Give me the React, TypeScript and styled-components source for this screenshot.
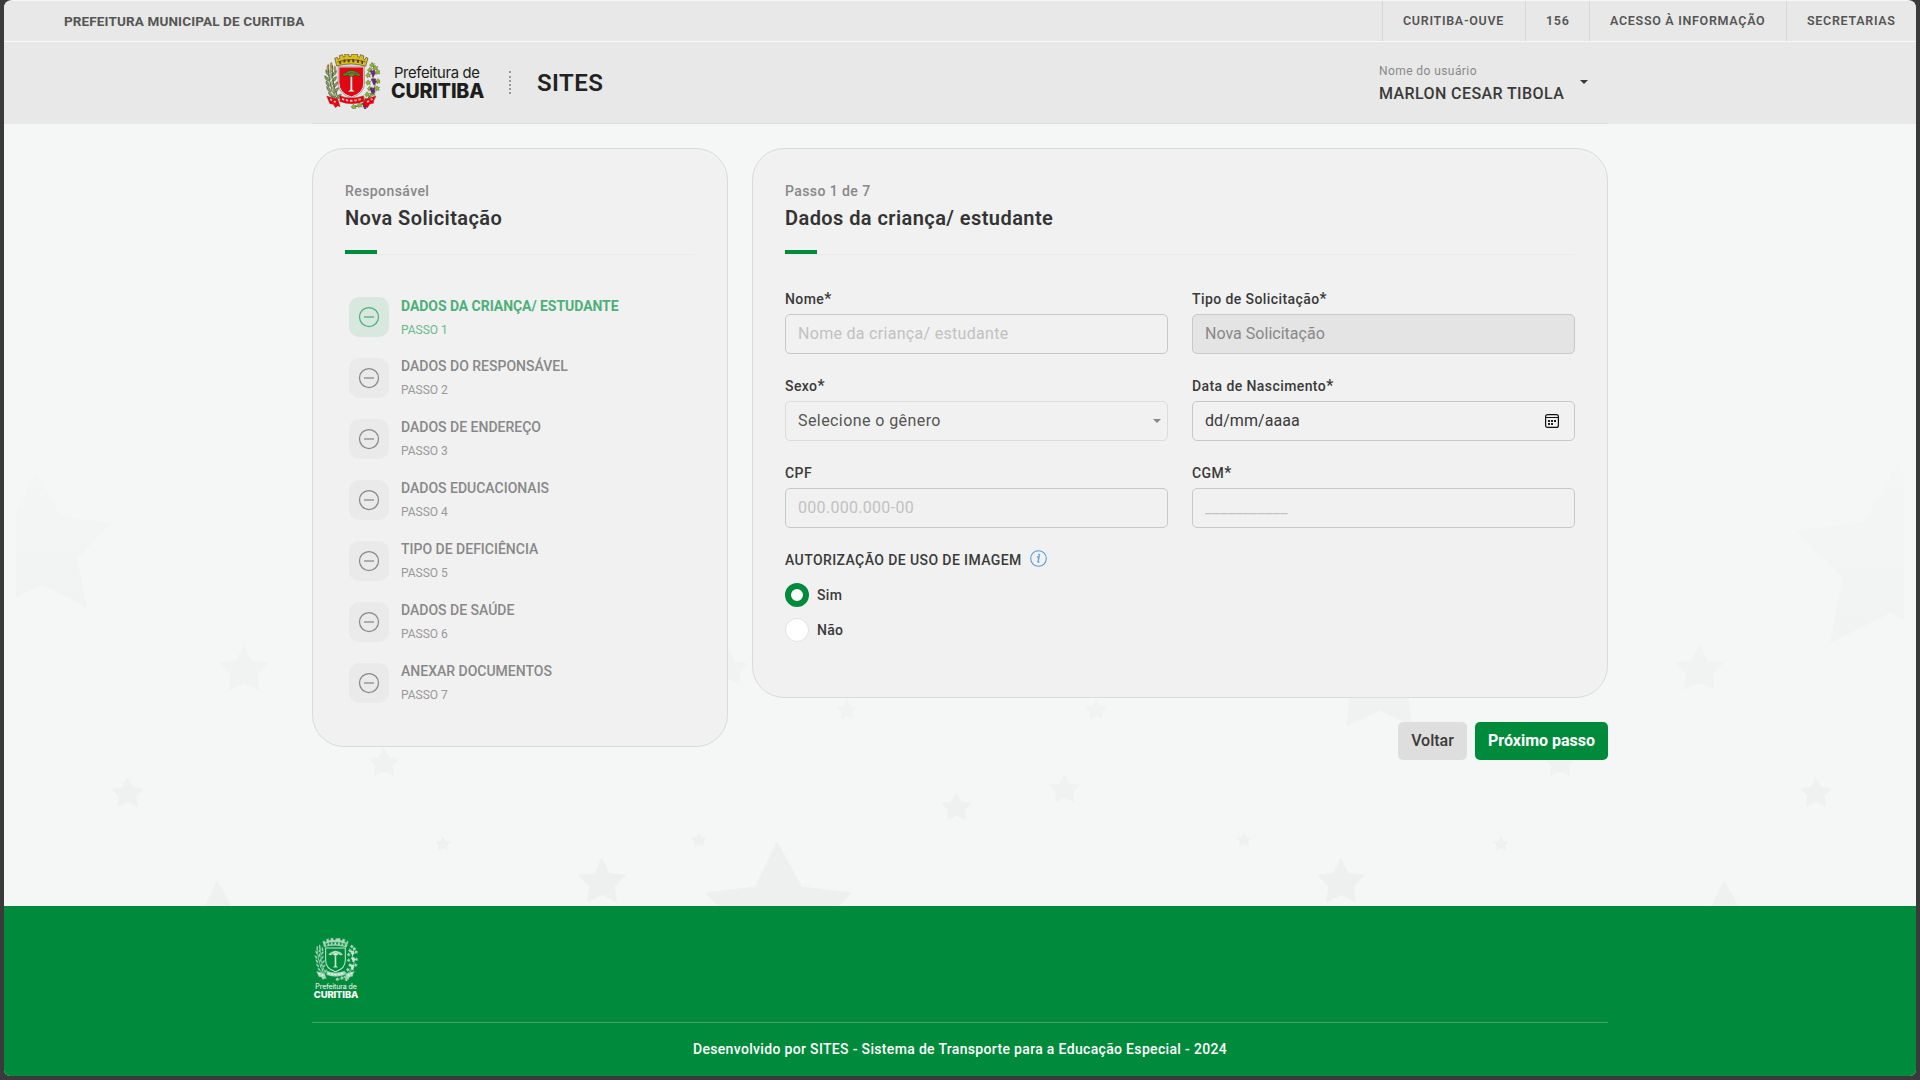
import React from "react";
import styled, { createGlobalStyle, css } from "styled-components";

const GlobalStyle = createGlobalStyle`
  * { box-sizing: border-box; }
  html, body { margin: 0; padding: 0; background: #3a3a3a; }
  body { font-family: Roboto, "Liberation Sans", sans-serif; color: #3a3a3a; overflow: hidden; }
  button, input { font-family: inherit; }
`;

const Desktop = styled.div`
  width: 1920px;
  height: 1080px;
  padding: 0 4px 4px;
  background: #3a3a3a;
`;

const Page = styled.div`
  position: relative;
  display: flex;
  flex-direction: column;
  height: 1076px;
  background: #f5f7f6;
  border-radius: 8px 8px 6px 6px;
  overflow: hidden;
`;

const Container = styled.div`
  width: 1296px;
  margin: 0 auto;
`;

const TopBar = styled.div`
  display: flex;
  justify-content: space-between;
  height: 41px;
  margin-top: 1px;
  background: #e8e8e8;
  border-bottom: 1px solid #f8f9f9;
  line-height: 40px;
  color: #555;
`;

const TopTitle = styled.span`
  padding-left: 60px;
  font-size: 13.5px;
  font-weight: 700;
  letter-spacing: 0.13px;
`;

const TopLinks = styled.nav`
  display: flex;
`;

const TopLink = styled.a<{ $w: number }>`
  width: ${(p) => p.$w}px;
  padding-left: 20px;
  border-left: 1px solid #d6d7d7;
  font-size: 12.5px;
  line-height: 40px;
  font-weight: 600;
  letter-spacing: 0.7px;
  white-space: nowrap;
`;

const Header = styled.header`
  height: 82px;
  background: #e8e8e8;
`;

const HeaderInner = styled(Container)`
  display: flex;
  justify-content: space-between;
  height: 82px;
  border-bottom: 1px solid #dcdfdd;
`;

const Brand = styled.div`
  display: flex;
  align-items: flex-start;
  padding: 12px 0 0 12px;
`;

const BrandText = styled.div`
  width: 94px;
  margin: 10px 0 0 11px;
  color: #1d1d1b;
  font-family: Inter, sans-serif;
  white-space: nowrap;
`;

const BrandLight = styled.div`
  padding-left: 3px;
  font-size: 14.8px;
  line-height: 18px;
  letter-spacing: -0.35px;
`;

const BrandStrong = styled.div`
  margin-top: -1px;
  font-size: 19.6px;
  font-weight: 800;
  line-height: 20px;
  letter-spacing: -0.15px;
`;

const Dots = styled.div`
  width: 0;
  height: 23px;
  margin: 17px 0 0 24px;
  border-left: 2px dotted #999;
`;

const SiteName = styled.div`
  margin: 14px 0 0 26px;
  font-size: 24px;
  line-height: 30px;
  font-weight: 600;
  letter-spacing: 0.45px;
  color: #222;
`;

const User = styled.div`
  display: flex;
  width: 229px;
  padding-top: 20px;
`;

const UserLabel = styled.div`
  font-size: 12px;
  line-height: 18px;
  letter-spacing: 0.42px;
  color: #888;
`;

const UserName = styled.div`
  margin-top: 3px;
  font-size: 16px;
  line-height: 22px;
  font-weight: 500;
  letter-spacing: 0.4px;
  white-space: nowrap;
`;

const Caret = styled.span<{ $size: number; $color: string }>`
  width: 0;
  height: 0;
  border: ${(p) => p.$size}px solid transparent;
  border-top-color: ${(p) => p.$color};
  border-bottom: 0;
`;

const UserCaret = styled(Caret)`
  margin: 18px 0 0 16px;
`;

const Main = styled.main`
  position: relative;
  flex: 1;
`;

const Sky = styled.svg`
  position: absolute;
  inset: 0;
  width: 1912px;
  height: 782px;
`;

const Content = styled(Container)`
  position: relative;
  display: grid;
  grid-template-columns: 416px 856px;
  gap: 24px;
  align-items: start;
  padding-top: 24px;
`;

const Card = styled.section<{ $h: number }>`
  height: ${(p) => p.$h}px;
  padding: 31px 32px;
  background: #f1f1f1;
  border: 1px solid #dadcdb;
  border-radius: 32px;
`;

const Kicker = styled.div`
  font-size: 14px;
  line-height: 22px;
  font-weight: 500;
  letter-spacing: 0.42px;
  color: #888;
`;

const Title = styled.h1`
  margin: 4px 0 20px;
  font-size: 20px;
  line-height: 24px;
  font-weight: 600;
  letter-spacing: 0.43px;
  color: #333;
`;

const Rule = styled.div`
  height: 5px;
  border-bottom: 1px solid #e9ebea;
  &::before {
    content: "";
    display: block;
    width: 32px;
    height: 4px;
    background: #008b3c;
  }
`;

const Steps = styled.ol`
  display: flex;
  flex-direction: column;
  gap: 21px;
  margin: 42px 0 0;
  padding: 0 0 0 4px;
  list-style: none;
`;

const Step = styled.li<{ $active?: boolean }>`
  display: flex;
  gap: 12px;
  height: 40px;
  color: ${(p) => (p.$active ? "#4db079" : "#888")};
`;

const StepIcon = styled.span<{ $active?: boolean }>`
  display: grid;
  place-items: center;
  width: 40px;
  height: 40px;
  border-radius: 10px;
  background: ${(p) => (p.$active ? "#d9e8de" : "#eaeaea")};
`;

const StepName = styled.div<{ $active?: boolean }>`
  margin-top: ${(p) => (p.$active ? 0 : -1)}px;
  font-size: 14px;
  line-height: 18px;
  font-weight: ${(p) => (p.$active ? 700 : 500)};
  letter-spacing: ${(p) => (p.$active ? -0.05 : 0)}px;
`;

const StepNumber = styled.div<{ $active?: boolean }>`
  margin-top: 7px;
  font-size: 12px;
  line-height: 16px;
  color: ${(p) => (p.$active ? "#68ba8c" : "#999")};
`;

const FormGrid = styled.div`
  display: grid;
  grid-template-columns: 383px 383px;
  gap: 22px 24px;
  margin-top: 34px;
`;

const Field = styled.label`
  display: flex;
  flex-direction: column;
`;

const labelText = css`
  font-size: 14px;
  font-weight: 500;
  letter-spacing: 0.41px;
  color: #3a3a3a;
`;

const FieldLabel = styled.span`
  ${labelText}
  height: 25px;
  line-height: 20px;
  white-space: nowrap;
`;

const Star = styled.span`
  font-size: 16px;
  line-height: 16px;
`;

const box = css`
  width: 383px;
  height: 40px;
  padding: 0 12px;
  border: 1px solid #c8c8c8;
  border-radius: 5px;
  font-size: 16px;
  letter-spacing: 0.3px;
`;

const Input = styled.input`
  ${box}
  padding-bottom: 2px;
  background: transparent;
  outline: none;
  &::placeholder { color: #c1c1c1; opacity: 1; }
  &:disabled { background: #e4e4e4; color: #888; letter-spacing: 0.02px; }
`;

const FauxBox = styled.div<{ $soft?: boolean }>`
  ${box}
  display: flex;
  align-items: center;
  justify-content: space-between;
  padding-bottom: 1px;
  border-color: ${(p) => (p.$soft ? "#dcdcdc" : "#c8c8c8")};
  padding-right: ${(p) => (p.$soft ? 6 : 15)}px;
  color: ${(p) => (p.$soft ? "#555" : "#3a3a3a")};
  letter-spacing: ${(p) => (p.$soft ? 0.42 : 0.06)}px;
`;

const Legend = styled.div`
  ${labelText}
  display: flex;
  align-items: center;
  gap: 8px;
  height: 20px;
  margin-top: 22px;
`;

const RadioGroup = styled.div`
  display: flex;
  flex-direction: column;
  gap: 11px;
  margin-top: 13px;
`;

const Radio = styled.label`
  ${labelText}
  display: flex;
  align-items: center;
  gap: 8px;
  height: 24px;
  letter-spacing: 0.3px;
`;

const RadioDot = styled.span<{ $on?: boolean }>`
  width: 24px;
  height: 24px;
  border-radius: 50%;
  background: #fff;
  border: ${(p) => (p.$on ? "6.5px solid #008b3c" : "1px solid #dfe2e6")};
`;

const Actions = styled.div`
  display: flex;
  justify-content: flex-end;
  gap: 8px;
  margin-top: 24px;
`;

const Button = styled.button<{ $primary?: boolean }>`
  width: ${(p) => (p.$primary ? 133 : 69)}px;
  height: 38px;
  padding: 0 0 2px;
  border: 0;
  border-radius: 5px;
  background: ${(p) => (p.$primary ? "#008b3c" : "#dedede")};
  color: ${(p) => (p.$primary ? "#fff" : "#3a3a3a")};
  font-size: 16px;
  font-weight: ${(p) => (p.$primary ? 700 : 500)};
  white-space: nowrap;
`;

const Footer = styled.footer`
  position: relative;
  height: 170px;
  background: #008b3c;
  color: #fff;
`;

const FooterTop = styled(Container)`
  height: 117px;
  padding: 32px 0 0 1px;
  border-bottom: 1px solid #3fa466;
`;

const FooterBrand = styled.div`
  display: flex;
  flex-direction: column;
  align-items: center;
  width: 46px;
  font-family: Inter, sans-serif;
  white-space: nowrap;
`;

const FooterLight = styled.div`
  margin-top: 1px;
  font-size: 7px;
  line-height: 9px;
  letter-spacing: -0.1px;
`;

const FooterStrong = styled.div`
  font-size: 9.5px;
  line-height: 8px;
  font-weight: 800;
  letter-spacing: -0.15px;
`;

const Credit = styled.div`
  margin-top: 16px;
  text-align: center;
  font-size: 14px;
  line-height: 20px;
  font-weight: 500;
  letter-spacing: 0.33px;
`;

const LEAVES: [number, number, number][] = [
  [52, 100, -25], [64, 92, 20], [74, 102, 35], [50, 118, -35], [62, 112, 10], [74, 120, 35],
  [53, 134, -30], [66, 132, 20], [78, 136, 35], [56, 150, -35], [69, 150, 15], [80, 153, 40],
  [62, 166, -40], [76, 166, 20], [87, 172, 50], [72, 178, -40],
];
const VINE: [number, number][] = [
  [188, 77], [198, 86], [181, 92], [205, 98], [176, 108], [206, 126], [176, 130],
  [203, 148], [181, 148], [190, 163], [173, 166], [163, 181], [184, 178], [150, 198], [132, 203],
];
const GRAPES: [number, number][] = [[190, 102], [193, 127], [189, 155], [166, 200]];

function Crest({ width, height, mono }: { width: number; height: number; mono?: boolean }) {
  const c = (color: string) => (mono ? "#a9d8bb" : color);
  const line = mono ? "#008b3c" : "#1d1d1b";
  const red = mono ? "#008b3c" : "#e30613";
  return (
    <svg width={width} height={height} viewBox="42 44 170 166" preserveAspectRatio="none">
      <path d="M56 76C54 110 60 150 84 184M68 78C66 115 70 150 88 180" fill="none" stroke={c("#5d6b3a")} strokeWidth="3" />
      {LEAVES.map(([x, y, r], i) => (
        <g key={i} transform={`translate(${x} ${y}) rotate(${r})`}>
          <path d="M0 -10C5 -4 5 5 0 10C-5 5 -5 -4 0 -10Z" fill={c(i % 3 === 1 ? "#b6bd7c" : "#82a44f")} stroke={line} strokeWidth="1" />
        </g>
      ))}
      <g fill={c("#c79a3a")} stroke={line} strokeWidth=".7">
        <ellipse cx="54" cy="84" rx="3" ry="8" /><ellipse cx="64" cy="78" rx="3" ry="9" /><ellipse cx="75" cy="88" rx="3" ry="8" />
      </g>
      <path d="M188 72C205 92 182 105 194 125C204 145 186 165 168 186C156 198 142 204 128 205" fill="none" stroke={c("#56682e")} strokeWidth="3" />
      {VINE.map(([x, y], i) => (
        <path key={i} transform={`translate(${x} ${y})`} d="M0 -8L3 -3L8 -4L5 1L7 6L1 5L-3 8L-4 3L-8 1L-4 -3Z" fill={c("#8fb82d")} stroke={line} strokeWidth=".8" />
      ))}
      {GRAPES.map(([x, y], i) => (
        <g key={i} fill={mono ? "#d5ecdd" : "#6c2a7c"} stroke={mono ? "none" : "#3e1749"} strokeWidth=".5">
          <circle cx={x - 4} cy={y - 5} r="3.8" /><circle cx={x + 3} cy={y - 5} r="3.8" />
          <circle cx={x - 1} cy={y + 1} r="3.8" /><circle cx={x + 5} cy={y + 1} r="3.6" /><circle cx={x + 1} cy={y + 7} r="3.5" />
        </g>
      ))}
      <path d="M80 80L74 57L82 54L85 60L90 57L88 49L98 46L101 53L106 52L105 44H118V51L124 52L126 45L145 44V52L151 54L154 46L165 50L162 58L168 61L171 54L177 57L170 81Q125 68 80 80Z" transform="translate(2 0) scale(.98 1)" fill={c("#dcbc1c")} stroke={line} strokeWidth="1.500" />
      <path d="M83 68Q125 54 168 68" fill="none" stroke={line} strokeWidth="1.600" />
      <g fill={mono ? "#008b3c" : "#4d3e0b"}>
        <path d="M88 66l6-2v9l-5 2zM101 61l6-1v9l-6 1zM114 60h6v9h-6zM128 60h6v9h-6zM142 61l6 1v9l-6-1zM155 64l6 2-1 9-5-2z" />
      </g>
      <path d="M87 83H163V130Q163 163 125 174Q87 163 87 130Z" fill={red} stroke={mono ? "#c5e4d0" : "#f2f2f2"} strokeWidth={mono ? 4 : 3} />
      <path d="M85 81H165V130Q165 165 125 176Q85 165 85 130Z" fill="none" stroke={mono ? "none" : "#1d1d1b"} strokeWidth="1" />
      <path d="M122 108H128L128.500 152L136 158H114L121.500 152Z" fill={mono ? "#d5ecdd" : "#f7e9df"} stroke={line} strokeWidth=".8" />
      <path d="M97 108L103 102L108 99L114 96L125 93L137 96L144 99L149 103L154 109L145 111L137 107L130 112H120L114 107L106 111Z" fill={mono ? "#d5ecdd" : "#5b8a2c"} stroke={line} strokeWidth="1" />
      <path d="M104 105L112 101L118 104L126 99L133 104L140 101L147 106" fill="none" stroke={mono ? "#008b3c" : "#24401a"} strokeWidth="1.500" />
      <path d="M50 171L84 181L91 203L84 200L77 206L70 196L60 194L57 187Z M200 171L166 181L160 205L168 200L174 206L181 195L192 193L193 185Z" fill={c("#e30613")} stroke={mono ? line : "#a30410"} strokeWidth="1" />
      <path d="M90 170Q125 184 162 170V187Q125 201 90 187Z" fill={c("#e30613")} stroke={mono ? line : "#a30410"} strokeWidth="1" />
      <path d="M97 180L104 182M109 183L116 185M121 185H129M135 185L142 183M147 182L154 180M61 181L67 184M72 187L77 189M173 189L179 185M184 182L190 179" stroke="#fff" strokeWidth="6" strokeDasharray="2.200 1.200" />
    </svg>
  );
}

// [left, top, width, fill] of each star, in page coordinates
const STARS: [number, number, number, string][] = [
  [219, 645, 50, "#f1f3f2"], [111, 777, 33, "#eff1f0"], [368, 747, 32, "#f0f2f1"], [176, 880, 84, "#eff1f0"],
  [836, 699, 22, "#f1f3f2"], [1085, 699, 22, "#f1f3f2"], [1049, 774, 31, "#f0f2f1"], [941, 792, 31, "#eff1f0"],
  [435, 836, 16, "#eff1f0"], [691, 832, 16, "#eff1f0"], [578, 858, 48, "#eef0ef"], [705, 841, 147, "#eef0ef"],
  [710, 650, 38, "#f1f3f2"], [1675, 645, 49, "#f1f3f2"], [1800, 777, 32, "#eff1f0"], [1236, 832, 16, "#eff1f0"],
  [1493, 836, 16, "#eff1f0"], [1317, 858, 48, "#eef0ef"], [1683, 880, 84, "#eff1f0"], [1544, 747, 32, "#f0f2f1"],
  [1326, 629, 106, "#f0f2f1"],
];

function Stars() {
  return (
    <Sky viewBox="4 124 1912 782">
      <defs>
        <linearGradient id="fade" x1="0" y1="0" x2="0" y2="1">
          <stop offset="0" stopColor="#f4f6f5" />
          <stop offset=".6" stopColor="#f1f4f2" />
          <stop offset="1" stopColor="#f1f3f2" />
        </linearGradient>
      </defs>
      <path d="M36 472L61 516L111 523L77 559L87 608L42 585L16 597V514Z" fill="url(#fade)" />
      <path d="M1897 464L1864 522L1795 530L1843 578L1830 643L1890 613L1904 620V476Z" fill="url(#fade)" />
      {STARS.map(([x, y, w, fill], i) => (
        <path
          key={i}
          transform={`translate(${x} ${y}) scale(${w / 100})`}
          d="M49 0L66 31L100 35L77 59L81 92L51 77L19 92L23 59L0 35L34 31Z"
          fill={fill}
        />
      ))}
    </Sky>
  );
}

function CalendarIcon() {
  return (
    <svg width="14" height="14" viewBox="0 0 14 14">
      <rect x=".6" y=".6" width="12.800" height="12.800" rx="2" fill="none" stroke="#111" strokeWidth="1.200" />
      <path d="M1 3.500H13" stroke="#111" strokeWidth="1" />
      <path d="M3 6h2v2H3zM6 6h2v2H6zM9 6h2v2H9zM3 9h2v2H3zM6 9h2v2H6z" fill="#222" />
    </svg>
  );
}

const InfoSvg = styled.svg`
  margin-top: -3px;
`;

function InfoIcon() {
  return (
    <InfoSvg width="17" height="17" viewBox="0 0 17 17">
      <circle cx="8.500" cy="8.500" r="7.800" fill="none" stroke="#5b9bd8" strokeWidth="1.100" />
      <circle cx="9.200" cy="4.700" r="1" fill="#5b9bd8" />
      <path d="M7 7.200L9 6.900L8 11.800Q7.900 12.600 9.400 11.700" fill="none" stroke="#5b9bd8" strokeWidth="1.300" />
    </InfoSvg>
  );
}

const STEP_NAMES = [
  "DADOS DA CRIANÇA/ ESTUDANTE",
  "DADOS DO RESPONSÁVEL",
  "DADOS DE ENDEREÇO",
  "DADOS EDUCACIONAIS",
  "TIPO DE DEFICIÊNCIA",
  "DADOS DE SAÚDE",
  "ANEXAR DOCUMENTOS",
];

export default function App() {
  return (
    <>
      <GlobalStyle />
      <Desktop>
        <Page>
          <TopBar>
            <TopTitle>PREFEITURA MUNICIPAL DE CURITIBA</TopTitle>
            <TopLinks>
              <TopLink $w={143}>CURITIBA-OUVE</TopLink>
              <TopLink $w={64}>156</TopLink>
              <TopLink $w={197}>ACESSO À INFORMAÇÃO</TopLink>
              <TopLink $w={130}>SECRETARIAS</TopLink>
            </TopLinks>
          </TopBar>
          <Header>
            <HeaderInner>
              <Brand>
                <Crest width={56} height={55} />
                <BrandText>
                  <BrandLight>Prefeitura de</BrandLight>
                  <BrandStrong>CURITIBA</BrandStrong>
                </BrandText>
                <Dots />
                <SiteName>SITES</SiteName>
              </Brand>
              <User>
                <div>
                  <UserLabel>Nome do usuário</UserLabel>
                  <UserName>MARLON CESAR TIBOLA</UserName>
                </div>
                <UserCaret $size={4} $color="#3a3a3a" />
              </User>
            </HeaderInner>
          </Header>
          <Main>
            <Stars />
            <Content>
              <Card $h={599}>
                <Kicker>Responsável</Kicker>
                <Title>Nova Solicitação</Title>
                <Rule />
                <Steps>
                  {STEP_NAMES.map((name, i) => (
                    <Step key={name} $active={i === 0}>
                      <StepIcon $active={i === 0}>
                        <svg width="22" height="22" viewBox="0 0 22 22" fill="none" stroke="currentColor">
                          <circle cx="11" cy="11" r="9.500" strokeWidth="1.250" />
                          <path d="M6 11H16" strokeWidth="1.700" opacity=".75" />
                        </svg>
                      </StepIcon>
                      <div>
                        <StepName $active={i === 0}>{name}</StepName>
                        <StepNumber $active={i === 0}>PASSO {i + 1}</StepNumber>
                      </div>
                    </Step>
                  ))}
                </Steps>
              </Card>
              <div>
                <Card $h={550}>
                  <Kicker>Passo 1 de 7</Kicker>
                  <Title>Dados da criança/ estudante</Title>
                  <Rule />
                  <FormGrid>
                    <Field>
                      <FieldLabel>Nome<Star>*</Star></FieldLabel>
                      <Input placeholder="Nome da criança/ estudante" />
                    </Field>
                    <Field>
                      <FieldLabel>Tipo de Solicitação<Star>*</Star></FieldLabel>
                      <Input disabled defaultValue="Nova Solicitação" />
                    </Field>
                    <Field>
                      <FieldLabel>Sexo<Star>*</Star></FieldLabel>
                      <FauxBox $soft>
                        Selecione o gênero
                        <Caret $size={4} $color="#888" />
                      </FauxBox>
                    </Field>
                    <Field>
                      <FieldLabel>Data de Nascimento<Star>*</Star></FieldLabel>
                      <FauxBox>
                        dd/mm/aaaa
                        <CalendarIcon />
                      </FauxBox>
                    </Field>
                    <Field>
                      <FieldLabel>CPF</FieldLabel>
                      <Input placeholder="000.000.000-00" />
                    </Field>
                    <Field>
                      <FieldLabel>CGM<Star>*</Star></FieldLabel>
                      <Input placeholder="___________" />
                    </Field>
                  </FormGrid>
                  <Legend>
                    AUTORIZAÇÃO DE USO DE IMAGEM
                    <InfoIcon />
                  </Legend>
                  <RadioGroup>
                    <Radio><RadioDot $on />Sim</Radio>
                    <Radio><RadioDot />Não</Radio>
                  </RadioGroup>
                </Card>
                <Actions>
                  <Button>Voltar</Button>
                  <Button $primary>Próximo passo</Button>
                </Actions>
              </div>
            </Content>
          </Main>
          <Footer>
            <FooterTop>
              <FooterBrand>
                <Crest width={44} height={43} mono />
                <FooterLight>Prefeitura de</FooterLight>
                <FooterStrong>CURITIBA</FooterStrong>
              </FooterBrand>
            </FooterTop>
            <Credit>Desenvolvido por SITES - Sistema de Transporte para a Educação Especial - 2024</Credit>
          </Footer>
        </Page>
      </Desktop>
    </>
  );
}
